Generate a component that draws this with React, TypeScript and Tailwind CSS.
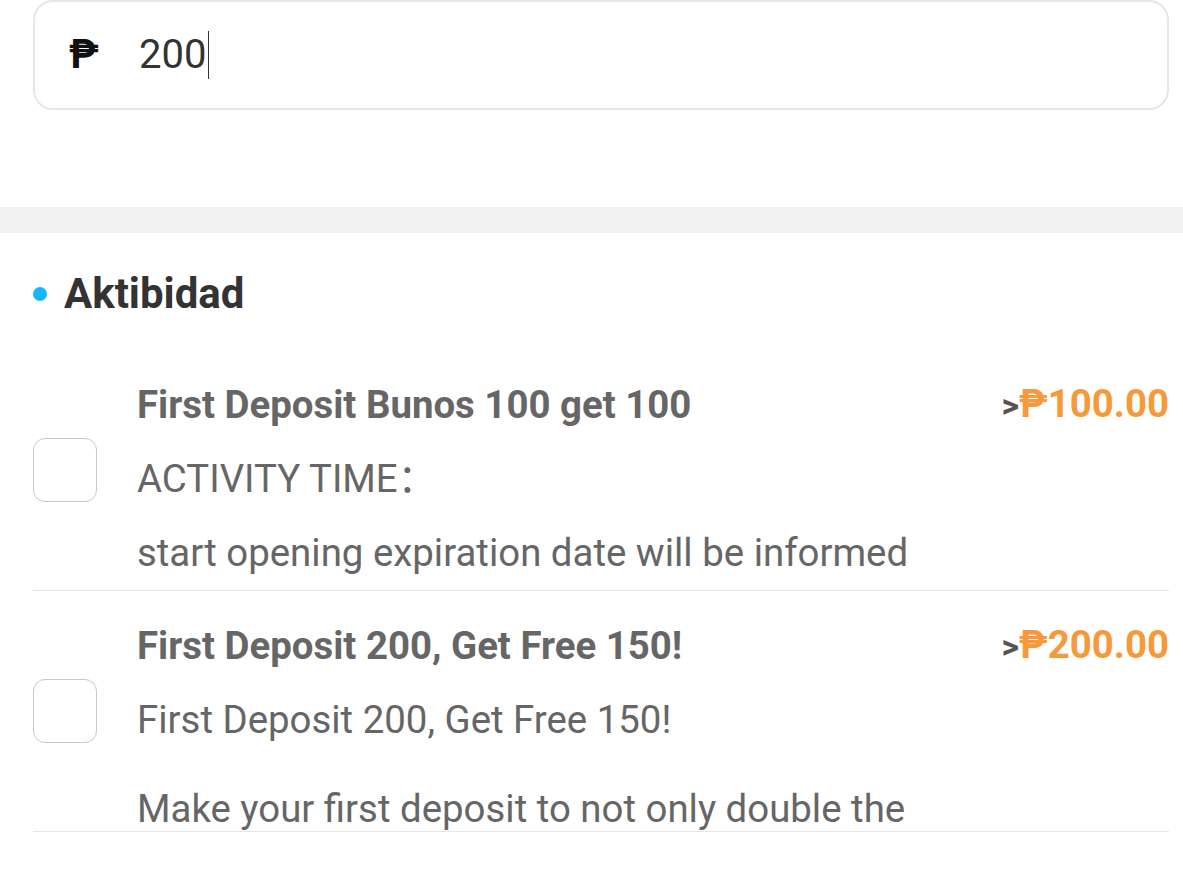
import React from 'react';

type Promo = { id: number; title: string; amount: string; lines: string[] };

const promos: Promo[] = [
  {
    id: 1,
    title: 'First Deposit Bunos 100 get 100',
    amount: '100.00',
    lines: ['ACTIVITY TIME：', 'start opening expiration date will be informed'],
  },
  {
    id: 2,
    title: 'First Deposit 200, Get Free 150!',
    amount: '200.00',
    lines: ['First Deposit 200, Get Free 150!', 'Make your first deposit to not only double the'],
  },
];

function PromoRow({ p }: { p: Promo }) {
  return (
    <div className="flex h-[241px] overflow-hidden border-b border-[#e6e6e6]">
      <div className="self-center w-[64px] h-[64px] shrink-0 rounded-[12px] border border-[#c9c9c9] bg-white" />
      <div className="ml-[40px] flex-1 pt-[17px] text-[38.4px] leading-[74px] text-[#666]">
        <div className="flex items-center justify-between">
          <span className="font-bold">{p.title}</span>
          <span className="font-bold">
            <span className="text-[#555] text-[34px]">&gt;</span>
            <span className="text-[#f7993a]">₱{p.amount}</span>
          </span>
        </div>
        <div className="whitespace-nowrap">{p.lines[0]}</div>
        <div className={p.id === 2 ? 'mt-[15px] whitespace-nowrap' : 'whitespace-nowrap'}>{p.lines[1]}</div>
      </div>
    </div>
  );
}

export default function App() {
  return (
    <main
      className="min-h-screen bg-white"
      style={{ fontFamily: 'Roboto, "Noto Sans CJK SC", "Noto Sans", sans-serif' }}
    >
      <div className="pl-[33px] pr-[14px]">
        <div className="flex h-[110px] items-center rounded-[20px] border-2 border-[#e6e6e6] pl-[34px]">
          <span className="w-[70px] text-[40px] font-bold text-[#111]">₱</span>
          <span className="text-[40px] text-[#333]">200</span>
          <span className="ml-[2px] h-[48px] w-[1px] bg-[#333]" />
        </div>
      </div>
      <div className="mt-[97px] h-[26px] bg-[#f2f2f2]" />
      <div className="pl-[33px] pr-[14px]">
        <div className="flex items-center gap-[17px] pt-[33px] pb-[28px]">
          <span className="h-[14px] w-[14px] rounded-full bg-[#16b7f7]" />
          <h2 className="text-[42px] font-bold leading-[56px] text-[#333]">Aktibidad</h2>
        </div>
        {promos.map(p => (
          <PromoRow key={p.id} p={p} />
        ))}
      </div>
    </main>
  );
}
